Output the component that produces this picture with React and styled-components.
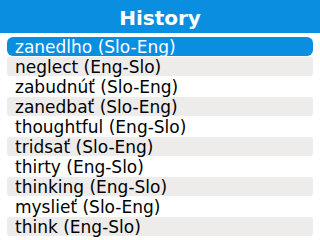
import React from 'react';
import styled, { createGlobalStyle } from 'styled-components';

const GlobalStyle = createGlobalStyle`
  html, body {
    margin: 0;
    padding: 0;
    background: #ffffff;
  }
`;

const Screen = styled.div`
  width: 320px;
  height: 240px;
  overflow: hidden;
  background: #ffffff;
  font-family: "DejaVu Sans", Verdana, sans-serif;
`;

const Header = styled.div`
  height: 33px;
  background: #0a8fe0;
  display: flex;
  align-items: center;
  justify-content: center;
`;

const Title = styled.h1`
  margin: 2px 0 0 0;
  color: #ffffff;
  font-size: 20px;
  font-weight: bold;
`;

const List = styled.ul`
  list-style: none;
  margin: 0;
  padding: 4px 7px 0 7px;
  display: flex;
  flex-direction: column;
  gap: 1px;
`;

const Row = styled.li`
  height: 19px;
  display: flex;
  align-items: center;
  padding-left: 8px;
  font-size: 17px;
  white-space: nowrap;
  border-radius: ${p => (p.$selected ? '6px' : '3px')};
  color: ${p => (p.$selected ? '#ffffff' : '#000000')};
  background: ${p => (p.$selected ? '#0a8fe0' : p.$shaded ? '#eeebeb' : 'transparent')};
`;

const entries = [
  'zanedlho (Slo-Eng)',
  'neglect (Eng-Slo)',
  'zabudnúť (Slo-Eng)',
  'zanedbať (Slo-Eng)',
  'thoughtful (Eng-Slo)',
  'tridsať (Slo-Eng)',
  'thirty (Eng-Slo)',
  'thinking (Eng-Slo)',
  'myslieť (Slo-Eng)',
  'think (Eng-Slo)',
];

export default function App() {
  return (
    <>
      <GlobalStyle />
      <Screen>
        <Header>
          <Title>History</Title>
        </Header>
        <List>
          {entries.map((text, i) => (
            <Row key={text} $selected={i === 0} $shaded={i % 2 === 1}>
              {text}
            </Row>
          ))}
        </List>
      </Screen>
    </>
  );
}
